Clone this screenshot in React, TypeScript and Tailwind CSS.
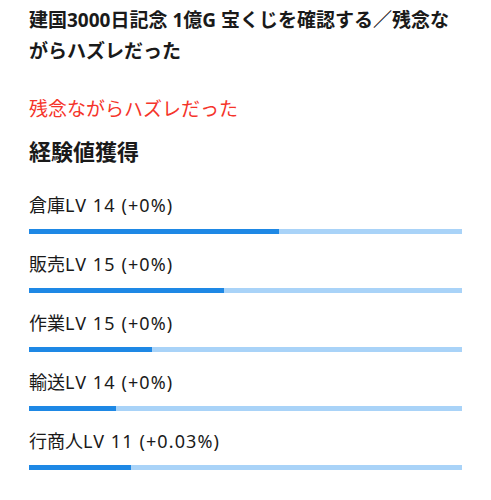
const skills = [
  { name: '倉庫', lv: 14, gain: '+0%', pct: 57.7 },
  { name: '販売', lv: 15, gain: '+0%', pct: 45 },
  { name: '作業', lv: 15, gain: '+0%', pct: 28.4 },
  { name: '輸送', lv: 14, gain: '+0%', pct: 20 },
  { name: '行商人', lv: 11, gain: '+0.03%', pct: 23.6 },
];

export default function App() {
  return (
    <div className="min-h-screen bg-white px-[29px] pt-[5px] font-['Noto_Sans','Noto_Sans_CJK_JP',sans-serif] text-[#1a1a1a]">
      <h1 className="text-[19px] font-bold leading-[31px]">
        建国3000日記念 1億G 宝くじを確認する／残念ながらハズレだった
      </h1>
      <p className="mt-[28px] text-[19px] leading-[28px] text-[#f5342a]">残念ながらハズレだった</p>
      <h2 className="mt-[13px] text-[22px] font-bold leading-[30px]">経験値獲得</h2>

      <div className="mt-[26px]">
        {skills.map((s) => (
          <div key={s.name} className="pb-[17px]">
            <div className="text-[18px] leading-[26px]">
              {s.name}
              <span className="tracking-[1.1px]">
                LV {s.lv} ({s.gain})
              </span>
            </div>
            <div className="mt-[11px] h-[5px] w-full bg-[#a9d3f8]">
              <div className="h-full bg-[#1e88e5]" style={{ width: `${s.pct}%` }} />
            </div>
          </div>
        ))}
      </div>
    </div>
  );
}
